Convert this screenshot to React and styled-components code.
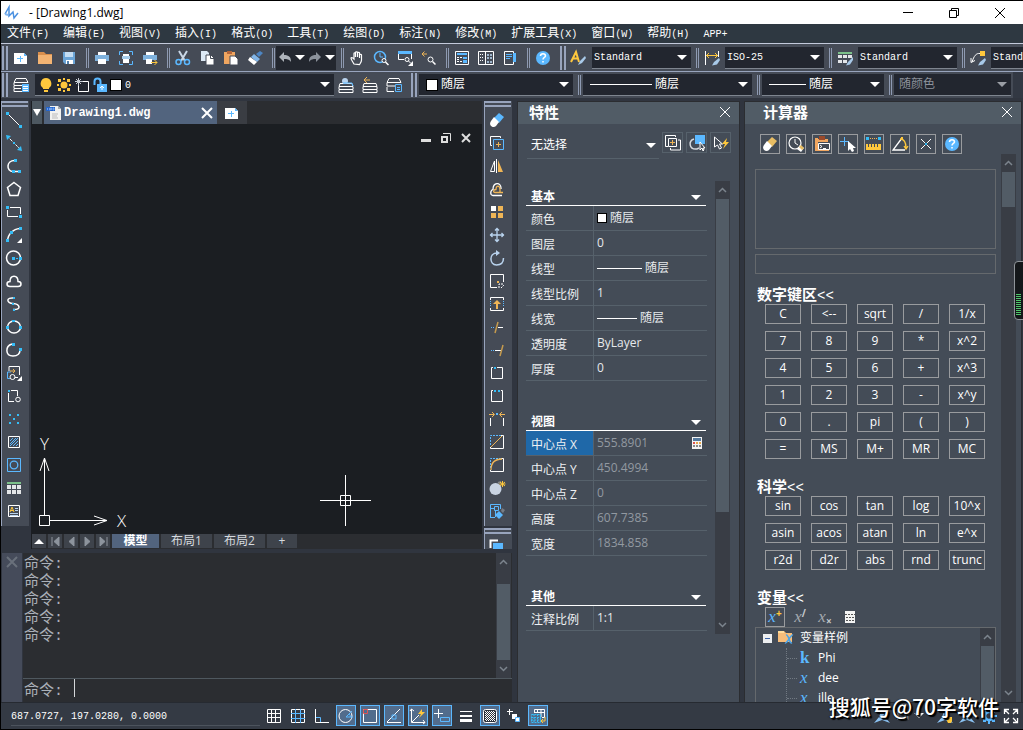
import React, { useState } from 'react';
import styled, { createGlobalStyle, css } from 'styled-components';

const UI = "'Open Sans', 'Noto Sans CJK SC', sans-serif";
const MONO = "'Liberation Mono', 'Noto Sans CJK SC', monospace";

const W = '#ffffff';
const B = '#5bb8ff';
const C = '#35bdf7';
const O = '#efb556';
const Y = '#ffc83d';
const L = '#b9d3ee';
const G = '#7cc08a';

const GlobalStyle = createGlobalStyle`
  * {
    box-sizing: border-box;
  }

  body {
    margin: 0;
    background: #323843;
    overflow: hidden;
  }

  button, input, select {
    margin: 0;
    padding: 0;
    border: 0;
    border-radius: 0;
    background: none;
    color: inherit;
    font: inherit;
    outline: none;
  }
`;

/* 16px glyphs used by every toolbar */
const glyphs = {
  newFile: <><path d="M1 3h10l3 3v8H1z" fill={W} /><path d="M11 3v3h3z" fill={B} /><path d="M4 8.500h6M7.500 6v6" stroke={B} /></>,
  open: <><path d="M1 2h6l2 2h6v10H1z" fill="#d98f4d" /><path d="M1 5h14v9H1z" fill="#f3b473" /></>,
  save: <><path d="M2 2h12v12H4l-2-2z" fill="#6ba5d7" /><path d="M4 2h8v5H4z" fill="#c3ddf3" /><path d="M5 10h7v4H5z" fill={W} /><path d="M6 11h2v3H6z" fill="#5482ad" /></>,
  print: <><path d="M4 2h8v3H4z" fill={W} /><path d="M1 5h14v6H1z" fill="#7fb2dd" /><path d="M4 9h8v5H4z" fill={W} /></>,
  preview: <><path d="M1.500 5V1.500H5M11 1.500h3.500V5M1.500 11v3.500H5M11 14.500h3.500V11" stroke={B} /><path d="M5 4h6v2H5zM5 9h6v4H5z" fill={W} /><path d="M4 6h8v3H4z" fill="#a5cceb" /></>,
  plot: <><path d="M4 2h8v3H4z" fill={W} /><path d="M1 5h14v5H1z" fill="#7fb2dd" /><path d="M4 9h6v5H4z" fill={W} /><path d="M9 12.500h6M12.500 10l2.500 2.500-2.500 2.500" stroke={Y} /></>,
  cut: <><path d="M4 1l6 10M12 1L6 11" stroke="#c9d7e6" strokeWidth="2" /><circle cx="3.500" cy="12" r="2.500" stroke={B} strokeWidth="1.500" /><circle cx="12" cy="12" r="2.500" stroke={B} strokeWidth="1.500" /></>,
  copy: <><path d="M2 1h6l2 2v8H2z" fill="#dce9f5" /><path d="M7 5h5l3 3v7H7z" fill={W} stroke="#454b56" /><path d="M11.500 5v3.500H15" stroke="#454b56" /></>,
  paste: <><path d="M1 2h11v12H1z" fill="#f0a660" /><path d="M4 1h5v3H4z" fill="#b5673b" /><path d="M7 6h5l3 3v6H7z" fill={W} stroke="#454b56" /></>,
  brush: <><path d="M13 1l3 2-4 4-3-3z" fill="#4d86c4" /><path d="M7 4l6 5-3 3-6-5z" fill="#82b6e8" /><path d="M3 7l7 5-3 3-6-5z" fill={W} /></>,
  undo: <path d="M2 7l5-5v3c5 0 7 2 7 7-2-3-4-3-7-3v3z" fill="#aeb3ba" />,
  redo: <path d="M14 7L9 2v3c-5 0-7 2-7 7 2-3 4-3 7-3v3z" fill="#8c929b" />,
  hand: <path d="M5 14c-1-2-3-4-3-6 1-1 2 0 3 1V3.500c0-1 1.500-1 1.500 0V7 2.500c0-1 2-1 2 0V7 3c0-1 2-1 2 0v5V5c0-1 2-1 2 0v5c0 2-1 3-2 4.500z" stroke={W} strokeWidth="1.200" />,
  zoomTime: <><circle cx="7" cy="7" r="5.500" stroke={B} strokeWidth="1.500" /><path d="M7 3v4h3" stroke={B} /><circle cx="11" cy="10.500" r="2" stroke={W} fill="#454b56" /><path d="M12.500 12l3 3" stroke={W} strokeWidth="1.500" /></>,
  zoomWin: <><path d="M1 1h14v3H1z" fill={B} /><path d="M1.500 4v5.500H7M14.500 4v5" stroke={W} /><circle cx="10" cy="9.500" r="2" stroke={W} /><path d="M11.500 11l2 2" stroke={W} /><path d="M16 11v5h-5z" fill={W} /></>,
  zoomPrev: <><path d="M1 4h5M3.500 1.500L1 4l2.500 2.500" stroke={O} /><circle cx="9.500" cy="9.500" r="2.500" stroke={W} /><path d="M11.500 11.500l3 3" stroke={W} strokeWidth="1.500" /></>,
  propsSheet: <><path d="M1.500 1.500h13v13h-13z" stroke={W} /><path d="M3 3h10v2H3z" fill={B} /><path d="M3 7.500h5M3 9.500h3M3 11.500h5" stroke={W} strokeDasharray="2 1" /><path d="M9 7h4v2H9zM9 10h4v3H9z" fill={B} /></>,
  design: <><path d="M.500 1.500h15v13H.500zM7.500 1v14" stroke={W} /><path d="M2 4.500h4M2 7.500h4M2 10.500h4" stroke={W} strokeDasharray="1 1" /><path d="M9 4h2v2H9zM12 4h2v2h-2zM9 7h2v2H9zM12 7h2v2h-2zM9 11h2v2H9zM12 11h2v2h-2z" fill="#9fb6cd" /></>,
  toolSheet: <><path d="M2.500 1.500h9v13h-9z" stroke={W} /><path d="M4 4.500h6M4 6.500h6M4 8.500h4" stroke={B} /><path d="M11 3h3v9h-3z" fill={B} /></>,
  help: <><circle cx="8" cy="8" r="7" fill={B} /><path d="M5.500 6c0-3 5-3 5 0 0 1.500-2.500 1.500-2.500 3.500M8 11v1.500" stroke={W} strokeWidth="1.500" /></>,
  textStyle: <><path d="M1 12L6 2l3 10M3 8.500h5" stroke={Y} strokeWidth="2" /><path d="M15 6l-5 5-2 4 4-2 4-5z" fill="#a8c9e8" /></>,
  dimStyle: <><path d="M1.500 1v14M14.500 1v6" stroke={W} /><path d="M2 5.500h12M5 3L2.500 5.500 5 8M11 3l2.500 2.500L11 8" stroke={Y} /><path d="M15 8l-5 4-2 3.500 5-1L16 10z" fill="#a8c9e8" /></>,
  tableStyle: <><path d="M1 2h14v2H1z" fill={G} /><path d="M1 5h4v3H1zM6 5h4v3H6zM11 5h4v3h-4zM1 10h4v3H1zM6 10h4v3H6z" fill="#e4e6e8" /><path d="M16 7l-5 5-2 3.500 4-1L16 10z" fill="#a8c9e8" /></>,
  leader: <><path d="M10 1h5v5h-5z" fill={Y} /><path d="M10 3.500C6 3 4 6 2 12M1 8v4.500l4-2" stroke={W} /><path d="M15 8l-5 4-2 3.500 5-1L16 10z" fill="#a8c9e8" /></>,
  layers: <><path d="M3 1.500h10l2 4H1zM1 6v2.500h8M1 9v2.500h7M1 12v2.500h8" stroke={W} /><path d="M9 7h7v8H9z" fill={B} /><path d="M10 9.500h5M10 11.500h5M10 13.500h5" stroke={W} /></>,
  bulb: <><path d="M8 1a5.500 5.500 0 0 1 3 10v1H5v-1A5.500 5.500 0 0 1 8 1z" fill={Y} /><path d="M6 13h4v2H6z" fill={Y} /></>,
  sun: <><circle cx="8" cy="8" r="3.500" fill={Y} /><path d="M7 1h2v2H7zM7 13h2v2H7zM1 7h2v2H1zM13 7h2v2h-2zM2 2h3v3H2zM11 2h3v3h-3zM2 11h3v3H2zM11 11h3v3h-3z" fill={Y} /></>,
  freeze: <><path d="M4.500 8v6.500h10v-10H9" stroke={W} /><path d="M4.500 1v8M1 4.500h8M2 2l5 5M7 2L2 7" stroke="#c7cdd4" /></>,
  unlock: <><path d="M2.500 8V4.500c0-4 6-4 6 0V8" stroke={B} strokeWidth="2" /><path d="M5 7h10v8H5z" fill={B} /><path d="M10 13V9M8 11l2-2 2 2" stroke={W} /></>,
  layerCur: <><path d="M2 6.500h12l1 3H1zM1 10v2.500h14V10M1 13v2.500h14V13" stroke={W} /><circle cx="7" cy="4" r="3" fill={L} /><path d="M5 6h9l1 3" stroke={B} /></>,
  layerPrev: <><path d="M2 6.500h12l1 3H1zM1 10v2.500h14V10M1 13v2.500h14V13" stroke={W} /><path d="M2 3h6M5 0L2 3l3 3" stroke={O} /></>,
  layerMgr: <><path d="M3 1.500h10l2 4H1zM1 6v3h8M1 10v4.500h7" stroke={W} /><path d="M9.500 7.500h6v7h-6zM11 10.500h3M11 12.500h3" stroke={B} /></>,
  dwg: <><path d="M4 1h8l3 3v11H4z" fill="#f2f2f0" /><path d="M12 1v3h3z" fill="#aaa" /><path d="M0 2h9v4H0z" fill="#2364cc" /><path d="M1.500 3v2M3.500 3v2h1V3h1v2M7 3h1v2H7z" stroke="#9cc6ff" strokeWidth=".6" /><path d="M6 9h6M6 11h5M6 13h6" stroke="#bbb" /></>,

  line: <><path d="M2 2l12 12" stroke={W} /><path d="M0 0h3v3H0zM13 13h3v3h-3z" fill={C} /></>,
  xline: <><path d="M1 1l14 14" stroke={W} strokeDasharray="3 1" /><path d="M0 0l5 1-4 4zM16 16l-5-1 4-4z" fill={C} /><path d="M7 7h2v2H7z" fill={C} /></>,
  pline: <><path d="M9 2.500C0 2 0 13.500 7 13.500h7" stroke={W} strokeWidth="1.500" /><path d="M8 1h3v3H8zM6 12h3v3H6zM12 12h3v3h-3z" fill={C} /></>,
  polygon: <path d="M8 1.500l6.500 5-2.500 8H4l-2.500-8z" stroke={W} strokeWidth="1.500" />,
  rect: <><path d="M4 3.500h10.500V10M12 12.500H1.500V6" stroke={W} /><path d="M0 2h3v3H0zM13 11h3v3h-3z" fill={C} /></>,
  arc: <><path d="M1.500 14C2 7 7 2 14 1.500" stroke={W} strokeWidth="1.500" /><path d="M0 12h3v3H0zM4 4h3v3H4zM13 0h3v3h-3z" fill={C} /><path d="M16 11v5h-5z" fill={W} /></>,
  circle: <><circle cx="7.500" cy="8" r="7" stroke={W} strokeWidth="1.500" /><path d="M6 7h3v3H6zM10 8h2v1h-2zM13 7h3v3h-3z" fill={C} /></>,
  cloud: <path d="M4 13.500c-4 0-4-5 0-5 0-7 8-7 8 0 4 0 4 5 0 5z" stroke={W} strokeWidth="1.500" />,
  spline: <><path d="M8 2C0 1 0 7 7 7.500S16 14 7 13.500" stroke={W} strokeWidth="1.500" /><path d="M7 1h2v2H7zM6 7h2v2H6zM7 13h2v2H7z" fill={C} /></>,
  ellipse: <><ellipse cx="8" cy="8" rx="6.500" ry="6" stroke={W} strokeWidth="1.500" /><path d="M6 1h3v2H6zM0 7h3v3H0zM13 7h3v3h-3z" fill={C} /></>,
  ellipseArc: <><path d="M6 2C-1 4-1 14 7 14c5 0 7-3 7-6" stroke={W} strokeWidth="1.500" /><path d="M6 1h3v3H6zM13 6h3v3h-3z" fill={C} /></>,
  insert: <><path d="M3 6V1.500h10.500V10" stroke={W} /><path d="M5 7H1.500v6.500H4" stroke={B} /><path d="M4 6h5M7 4l2 2-2 2" stroke={O} /><circle cx="6.500" cy="12" r="2.500" stroke={W} /><path d="M9 12.500h3" stroke={W} /><path d="M16 11v5h-5z" fill={W} /></>,
  block: <><path d="M5 2.500h6.500V8M2.500 5v8.500H8" stroke={W} /><path d="M2 2h2v2H2z" fill={C} /><circle cx="12" cy="11.500" r="2.300" stroke={W} /></>,
  points: <path d="M3 3h2v2H3zM11 3h2v2h-2zM7 7h2v2H7zM3 11h2v2H3zM11 11h2v2h-2z" fill={C} />,
  hatch: <><path d="M2.500 2.500h11v11h-11z" stroke={W} /><path d="M4 7l3-3M4 10l6-6M4 12l8-8M7 12l5-5M10 12l2-2" stroke={B} /></>,
  region: <><path d="M1.500 1.500h13v13h-13z" stroke={B} /><circle cx="8" cy="8" r="3.800" stroke={B} strokeWidth="1.300" /></>,
  table: <><path d="M1 2h14v2H1z" fill={G} /><path d="M1 5h4v4H1zM6 5h4v4H6zM11 5h4v4h-4zM1 10h4v4H1zM6 10h4v4H6zM11 10h4v4h-4z" fill="#e4e6e8" /></>,
  mtext: <><path d="M2.500 2.500h11v11h-11z" stroke={W} /><path d="M4 9l2-5 2 5M5 7.500h2" stroke={Y} /><path d="M9 5.500h3M9 7.500h3M4 10.500h8M4 12.500h8" stroke={L} /></>,

  eraser: <><path d="M10 1l5 4-5 6-5-5z" fill={B} /><path d="M5 5l5 5-3 4c-3 3-8-1-5-5z" fill={W} /></>,
  duplicate: <><path d="M3 10.500H1.500v-9h10V3" stroke={W} /><path d="M4.500 4.500h10v10h-10z" stroke={B} /><path d="M7 9.500h5M9.500 7v5" stroke={O} /></>,
  mirror: <><path d="M5.500 3v10.500H1.500z" stroke={W} /><path d="M7.500 1v14" stroke={W} /><path d="M9 2v12h5z" fill={O} /></>,
  offset: <><path d="M13 14.500H4c-3 0-3-5 0-6C4 1 12 1 12 7v1" stroke={W} strokeWidth="1.300" /><path d="M14 11.500H6c-2 0-2-3 1-3 0-5 4-4 4 0v3" stroke={O} strokeWidth="1.300" /></>,
  array: <><path d="M2 2h5v5H2z" fill={W} /><path d="M9 2h5v5H9zM2 9h5v5H2zM9 9h5v5H9z" fill={O} /></>,
  move: <path d="M8 1v14M1 8h14M6 3.500L8 1.500l2 2M6 12.500l2 2 2-2M3.500 6l-2 2 2 2M12.500 6l2 2-2 2" stroke={L} strokeWidth="1.300" />,
  rotate: <><path d="M8 3C0 3 0 14.500 7.500 15c5 0 7-3 7-7" stroke={L} strokeWidth="1.500" /><path d="M7 0l4 3-4 3z" fill={L} /></>,
  scale: <><path d="M8 14.500H1.500v-13h13V9" stroke={W} /><path d="M8 8h2v2H8z" fill={O} /><path d="M10 15v-4h5M12 15l3-3" stroke={W} strokeDasharray="2 1" /></>,
  stretch: <><path d="M1.500 4V1.500h13V4M1.500 12v2.500h13V12" stroke={W} /><path d="M1.500 5v6M14.500 5v6" stroke={B} strokeDasharray="1 1" /><path d="M8 4l4 4H9v5H7V8H4z" fill={O} /></>,
  trim: <><path d="M2 8.500h4" stroke={B} strokeDasharray="1 1" /><path d="M9 8.500h5" stroke={W} /><path d="M9 3L6 14" stroke="#c49a4e" strokeWidth="1.500" /></>,
  extend: <><path d="M2 8.500h4" stroke={B} strokeDasharray="1 1" /><path d="M6 8.500h6" stroke={W} /><path d="M14 3l-3 11" stroke="#c49a4e" strokeWidth="1.500" /></>,
  breakPt: <><path d="M4 2.500H2.500v11h11v-11H8" stroke={W} /><path d="M5 2h2v2H5z" fill={C} /></>,
  breakTwo: <><path d="M4 2.500H2.500v11h11v-11H12" stroke={W} /><path d="M5 2h2v2H5zM9 2h2v2H9z" fill={C} /></>,
  join: <><path d="M1.500 15V7M14.500 15V7" stroke={W} /><path d="M0 3.500h5M3 1l2.500 2.500L3 6M16 3.500h-5M13 1l-2.500 2.500L13 6" stroke={O} /><path d="M7 2h2v2H7z" fill={B} /></>,
  chamfer: <><path d="M12 1.500h2.500v13H1.500V13" stroke={W} /><path d="M1.500 11V1.500H12" stroke={B} strokeDasharray="2 1" /><path d="M2 13L13 2" stroke={O} /></>,
  fillet: <><path d="M12 1.500h2.500v13H1.500V13" stroke={W} /><path d="M1.500 11V1.500H12" stroke={B} strokeDasharray="2 1" /><path d="M2 13C2 6 6 2 13 2" stroke={O} strokeWidth="1.300" /></>,
  explode: <><circle cx="6.500" cy="9" r="6" fill="#c9d3e2" /><path d="M9 3l3-1" stroke="#888" strokeWidth="2" /><path d="M13.500 1v6M10.500 4h6M11 2l5 4M16 2l-5 4" stroke={Y} /></>,
  blockEdit: <><path d="M1.500 14V1.500h10V6M1 14.500h5M5.500 3.500h4v4h-4zM2 5.500h3M6.500 8v6" stroke={B} /><path d="M10 8l4 4-4 4-4-4z" fill={B} /><path d="M13 5l3 2-2 3-2-2z" fill="#777d85" /></>,
  order: <><path d="M1.500 9V1.500H9" stroke={W} strokeWidth="2" /><path d="M4 4h10v9H4z" fill={B} /><path d="M15 10h2v6h-2z" fill={W} /></>,

  pickAdd: <><path d="M3 11.500H.500v-11h10V2" stroke={W} /><path d="M3.500 3.500h8v8h-8z" stroke={W} /><path d="M13 5h2.500v10h-10V13" stroke={W} /><path d="M5 7.500h5M7.500 5v5" stroke={O} /></>,
  selectObj: <><path d="M5 4c-6 2-5 11 3 10l2-1" stroke="#d5d9dd" strokeWidth="1.500" /><path d="M6 0h10v9H6z" fill={B} /><path d="M11 7v8l2-2 1 3 1-1-1-2h2z" fill="#444c57" stroke={W} /></>,
  quickSel: <><path d="M1.500 2v10l3-2 2 4 2-1-2-4h3z" stroke={W} /><path d="M14 3l-5 6h3l-2 5 6-7h-3z" fill={Y} /></>,
  calc: <><path d="M3 2h10v12H3z" fill="#f4f4f4" /><path d="M4 3h8v3H4z" fill="#557a9e" /><path d="M4 7h2v2H4z" fill="#d9534f" /><path d="M7 7h2v2H7zM10 7h2v2h-2z" fill="#e9a94c" /><path d="M4 10h2v2H4zM7 10h2v2H7zM10 10h2v2h-2z" fill="#888" /></>,
  calcGrey: <><path d="M3 2h10v12H3z" fill="#f4f4f4" /><path d="M3 5.500h10M4 8.500h8M4 11.500h8" stroke="#555" strokeDasharray="2 1" /></>,
  eraserY: <><path d="M10 1l5 4-5 6-5-5z" fill="#e8bd63" /><path d="M5 5l5 5-3 4c-3 3-8-1-5-5z" fill={W} /></>,
  history: <><circle cx="7" cy="7" r="6" stroke={W} strokeWidth="1.200" /><path d="M7 3v4l3 2" stroke={W} /><path d="M12 9l4 3-3 4-4-3z" fill={W} /><path d="M13 9l3 3-2 2-3-3z" fill="#e8bd63" /></>,
  toCmd: <><path d="M1 2h3v11h11v2H1z" fill="#f0a660" /><path d="M3 3h11v3H3z" fill="#f0a660" /><path d="M5 0h6v4H5z" fill="#9b4a2b" /><path d="M4.500 7.500h11v6h-11z" stroke={W} fill="#444c57" /><path d="M6 9l2 1.500L6 12M9 12.500h3" stroke={W} /></>,
  getPoint: <><path d="M0 5.500h9M4.500 1v9" stroke={B} /><path d="M8 5v10l2-2 2 3 2-1-1-3h3z" fill={W} /></>,
  distance: <><path d="M0 1h3v3H0zM12 1h3v3h-3z" fill={C} /><path d="M4 2.500h7" stroke={O} strokeDasharray="1 1" /><path d="M0 8h15v6H0z" fill={Y} /><path d="M2.500 8v3M5.500 8v3M8.500 8v3M11.500 8v3" stroke="#444c57" /></>,
  angle: <><path d="M10 2L1 14h12" stroke={W} strokeWidth="1.300" /><path d="M8 3c4 0 6 3 6 9M12 10l2 3 2-3" stroke={Y} strokeWidth="1.300" /><path d="M9 1h2v2H9z" fill={Y} /></>,
  cross: <><path d="M3 3l10 10M13 3L3 13" stroke={W} /><path d="M7 7h2v2H7z" fill={C} /></>,

  grid: <path d="M1.500 1.500h13v13h-13zM5.500 1v14M9.500 1v14M1 5.500h14M1 9.500h14" stroke={W} />,
  snap: <><path d="M1.500 1.500h13v13h-13z" stroke={W} /><path d="M5.500 1v14M10.500 1v14M1 5.500h14M1 10.500h14" stroke={B} /></>,
  ortho: <><path d="M1.500 1v13.500H15" stroke={W} /><path d="M2 9.500h4.500V14" stroke={B} /></>,
  polar: <><circle cx="7.500" cy="8" r="6.500" stroke={W} /><path d="M14 3L8 9h7M11 6c1 1 2 2 1 3" stroke={B} /></>,
  osnap: <><path d="M1.500 1.500h13v13h-13z" stroke={W} /><path d="M1.500 1.500h4v4h-4z" stroke="#e05555" /></>,
  otrack: <><path d="M1 14.500h14M1 14L14 1" stroke={W} /><path d="M6 7h4v4H6z" stroke={B} /></>,
  ducs: <><path d="M1.500 1v13.500H15M2 14l7-7M13 12l2 2.500-2 1.500M0 3l1.500-2L4 3" stroke={W} /><path d="M12 1L8 6h3l-2 4 6-6h-3z" fill={Y} /></>,
  dyn: <><path d="M0 5.500h9M4.500 1v9" stroke={W} /><path d="M6.500 9.500h9v4h-9z" stroke={B} /></>,
  lwt: <path d="M2 3h12v1H2zM2 7h12v2H2zM2 11h12v3H2z" fill={W} />,
  transp: <><rect x="1.500" y="1.500" width="13" height="13" rx="2" stroke={W} fill="#2b323c" /><path d="M3 3.500h10M3 5.500h10M3 7.500h10M3 9.500h10M3 11.500h10" stroke={W} strokeDasharray="1 1" /><path d="M4 4.500h9M4 6.500h9M4 8.500h9M4 10.500h9M4 12.500h9" stroke={W} strokeDasharray="1 1" /></>,
  cycle: <><path d="M1 3.500h6M3.500 1v6" stroke={W} /><path d="M6 6h5v5H6z" fill={W} /><path d="M9.500 9.500h4v4h-4z" stroke={B} fill={W} /></>,
  filter: <><path d="M4.500 5V1.500h10v8H12M7.500 1v4M11 1v8M4 4.500h10" stroke={W} /><path d="M1.500 6.500h9v8h-9zM4 6v9M7.500 6v9M1 9.500h10M1 12h10" stroke={C} strokeDasharray="2 1" /><path d="M15 9v4h-4M13 11l-2 2 2 2" stroke={Y} /></>,
  gear: <><circle cx="8" cy="8" r="4" stroke={B} strokeWidth="2.500" /><path d="M7 0h2v3H7zM7 13h2v3H7zM0 7h3v2H0zM13 7h3v2h-3zM2 2h3v3H2zM11 2h3v3h-3zM2 11h3v3H2zM11 11h3v3h-3z" fill={B} /></>,
  annot: <path d="M8 1l3 8 5 6-8-3-8 3 5-6z" fill="#8cc4f5" />,
  annotBulb: <><path d="M8 1l3 8 5 6-8-3-8 3 5-6z" fill="#8cc4f5" /><path d="M10 9h5v4l-1 2h-3l-1-2z" fill={Y} /></>,
  expand: <path d="M1.500 6V1.500H6M10 1.500h4.500V6M1.500 10v4.500H6M10 14.500h4.500V10M2 2l4 4M14 2l-4 4M2 14l4-4M14 14l-4-4" stroke={W} strokeWidth="1.300" />,
  logo: <><path d="M2 9l4-7v9l4-4 1 6 4-5" stroke="#4a90e0" strokeWidth="1.500" /><path d="M2 9l3 1" stroke="#82b5ef" strokeWidth="2" /></>,
  folderVar: <>
    <path d="M0 1h6l2 2h6v9H0z" fill="#f7bd7a" />
    <path d="M0 1h6v2H0z" fill="#ffdc9c" />
    <path d="M8 5c3-1 3 9 6 8M15 5c-2-1-6 9-8 8" stroke="#4aa3e8" strokeWidth="1.500" />
  </>,
};

const Svg = styled.svg`
  display: block;
  flex: none;
  overflow: visible;
`;

const Icon = ({ name }) => (
  <Svg width="16" height="16" viewBox="0 0 16 16" fill="none" aria-hidden="true">
    {glyphs[name]}
  </Svg>
);

const Caret = ({ color = W }) => (
  <Svg width="10" height="5" viewBox="0 0 10 5" aria-hidden="true">
    <path d="M0 0h10L5 5z" fill={color} />
  </Svg>
);

const CloseX = ({ color = W, weight = 1 }) => (
  <Svg width="10" height="10" viewBox="0 0 10 10" fill="none" aria-hidden="true">
    <path d="M0 0l10 10M10 0L0 10" stroke={color} strokeWidth={weight} />
  </Svg>
);

const Window = styled.div`
  display: flex;
  flex-direction: column;
  position: relative;
  height: 100vh;
  border: 1px solid #000;
  border-right: 0;
  background: #323843;
  color: #fff;
  font: 12px/16px ${UI};
  overflow: hidden;
`;

const TitleBar = styled.header`
  display: flex;
  align-items: center;
  flex: none;
  height: 23px;
  padding-left: 2px;
  gap: 10px;
  background: #fff;
  color: #000;
`;

const WinTitle = styled.h1`
  flex: 1;
  margin: 0;
  font-size: 12px;
  font-weight: 400;
`;

const WinButton = styled.button`
  display: flex;
  align-items: center;
  justify-content: center;
  width: 46px;
  height: 23px;
`;

const MenuBar = styled.nav`
  display: flex;
  flex: none;
  gap: 14px;
  height: 20px;
  padding-left: 6px;
  background: #2e3841;
  border-bottom: 1px solid #c3cadb;
  line-height: 18px;
  white-space: nowrap;
`;

const MenuItem = styled.button`
  height: 17px;
  line-height: 17px;
`;

const Key = styled.span`
  font: 10px ${MONO};
`;

const ToolRow = styled.div`
  display: flex;
  align-items: center;
  flex: none;
  height: ${(p) => (p.$main ? 28 : 26)}px;
  margin-right: ${(p) => (p.$main ? 0 : 10)}px;
  background: #454b56;
  border-bottom: ${(p) => (p.$main ? '1px solid #98a4bd' : 0)};
  overflow: hidden;
`;

const Grip = styled.i`
  flex: none;
  width: 6px;
  height: 24px;
  margin-left: ${(p) => (p.$first ? 1 : 5)}px;
  margin-right: ${(p) => (p.$first ? 1 : 0)}px;
  border: solid #98a4bd;
  border-width: 0 2px;
`;

const Sep = styled.i`
  flex: none;
  width: 3px;
  height: 20px;
  margin: 0 1px 0 5px;
  border: solid #8e9ab2;
  border-width: 0 1px;
`;

const ToolButton = styled.button`
  display: flex;
  align-items: center;
  justify-content: center;
  flex: none;
  width: ${(p) => p.$w || 24}px;
  height: 22px;
`;

const UndoBox = styled.div`
  display: flex;
  align-items: center;
  flex: none;
  width: 60px;
  height: 24px;
  background: #23272f;
`;

const Combo = styled.label`
  display: flex;
  align-items: center;
  flex: none;
  gap: 3px;
  width: ${(p) => p.$w}px;
  height: 22px;
  margin-left: ${(p) => p.$gap || 2}px;
  padding: 0 4px 0 ${(p) => p.$pad || 2}px;
  background: #22262f;
  border-bottom: 1px solid #7e858f;
  color: ${(p) => (p.$dim ? '#8d929b' : '#fff')};

  select {
    flex: 1;
    min-width: 0;
    padding-top: ${(p) => (p.$latin ? 2 : 0)}px;
    appearance: none;
    opacity: 1;
    font: ${(p) => (p.$latin ? 10 : 12)}px/18px ${MONO};
  }

  option {
    background: #22262f;
  }
`;

const Swatch = styled.i`
  flex: none;
  width: ${(p) => p.$size || 12}px;
  height: ${(p) => p.$size || 12}px;
  background: #fff;
  border: 1px solid #000;
`;

const Stroke = styled.i`
  flex: none;
  width: ${(p) => p.$w}px;
  height: 1px;
  background: #fff;
`;

const LayerState = styled.span`
  display: flex;
  align-items: center;
  gap: 2px;
`;

const Main = styled.main`
  display: flex;
  flex: 1;
  min-height: 0;
  padding: 3px 2px 0 0;
  background: #30353f;
`;

const Workspace = styled.div`
  display: flex;
  flex-direction: column;
  flex: 1;
  gap: 4px;
  min-width: 0;
  padding-right: 2px;
`;

const DrawingRow = styled.div`
  display: flex;
  flex: 1;
  gap: 2px;
  min-height: 0;
`;

const SideColumn = styled.div`
  display: flex;
  flex-direction: column;
  flex: none;
  gap: 2px;
  width: 28px;
  overflow: hidden;
`;

const SideTools = styled.div`
  flex: none;
  padding-bottom: 4px;
  background: #454b56;
  border-left: 1px solid #98a4bd;
`;

const SideGrip = styled.i`
  display: block;
  height: 6px;
  margin: 0 1px 1px 0;
  border: solid #98a4bd;
  border-width: 2px 0;
`;

const SideButton = styled.button`
  display: flex;
  justify-content: center;
  width: 24px;
  height: 23px;
  padding-top: 4px;
`;

const Document = styled.section`
  display: flex;
  flex-direction: column;
  flex: 1;
  min-width: 0;
  padding-left: 1px;
  background: #1b1e22;
`;

const DocTabs = styled.div`
  display: flex;
  flex: none;
  height: 23px;
  background: #2b2d31;
`;

const DocMenu = styled.button`
  display: flex;
  align-items: center;
  justify-content: center;
  width: 10px;
  margin-right: 2px;
  background: #4d5861;
`;

const DocTab = styled.div`
  display: flex;
  align-items: center;
  gap: 2px;
  width: 173px;
  padding: 0 5px 0 2px;
  background: #52647e;
  font: bold 12px/20px ${MONO};

  span {
    flex: 1;
  }
`;

const PlainButton = styled.button`
  display: flex;
  align-items: center;
`;

const NewTab = styled.button`
  display: flex;
  align-items: center;
  justify-content: center;
  width: 30px;
  background: #3a3d43;
`;

const Canvas = styled.div`
  position: relative;
  flex: 1;
  min-height: 0;
  background: #1b1e22;
`;

const MdiButtons = styled.div`
  display: flex;
  justify-content: flex-end;
  align-items: center;
  gap: 10px;
  padding: 9px 11px 0 0;
`;

const OnCanvas = styled.svg`
  position: absolute;
  left: ${(p) => p.$left}px;
  bottom: ${(p) => p.$bottom}px;
  overflow: visible;
  font: 300 17px ${UI};
`;

const LayoutTabs = styled.div`
  display: flex;
  flex: none;
  gap: 2px;
  height: 15px;
  background: #2b2d31;
`;

const LayoutTab = styled.button`
  display: flex;
  align-items: center;
  justify-content: center;
  width: ${(p) => p.$w}px;
  height: 14px;
  background: ${(p) => (p.$active ? '#52647e' : '#3e434b')};
  color: ${(p) => (p.$active ? '#fff' : '#d6dade')};
  font: ${(p) => (p.$active ? 'bold' : 'normal')} 12px/14px ${UI};
`;

const CommandPanel = styled.section`
  display: flex;
  flex: none;
  height: 149px;
  margin-left: 1px;
`;

const CommandStrip = styled.div`
  display: flex;
  align-items: flex-start;
  justify-content: center;
  width: 20px;
  padding-top: 4px;
  margin-right: 1px;
  background: #454b5a;
`;

const CommandBody = styled.div`
  display: flex;
  flex-direction: column;
  flex: 1;
  background: #2b2d31;
  color: #abb1b9;
  font: 15px/18px ${MONO};
`;

const CommandLog = styled.div`
  display: flex;
  flex: 1;
  justify-content: space-between;
  min-height: 0;
  border-bottom: 1px solid #4f585f;

  ol {
    margin: 0;
    padding: 3px 0 0 1px;
    list-style: none;
  }
`;

const CommandLine = styled.label`
  display: flex;
  height: 23px;
  padding-left: 1px;
  line-height: 26px;

  input {
    flex: 1;
    height: 18px;
    margin-left: 2px;
    border-left: 1px solid #d4d7da;
  }
`;

const ScrollTrack = styled.div`
  display: flex;
  flex-direction: column;
  align-items: center;
  justify-content: space-between;
  flex: none;
  width: 15px;
  margin: ${(p) => p.$margin || 0};
  background: #393d45;
`;

const ScrollThumb = styled.div`
  width: 13px;
  height: ${(p) => p.$h};
  margin-bottom: auto;
  margin-top: ${(p) => p.$top || 0}px;
  background: #525c66;
`;

const ScrollButton = styled.button`
  display: flex;
  align-items: center;
  justify-content: center;
  flex: none;
  width: 15px;
  height: 18px;
`;

const Scrollbar = ({ thumb, top, margin, endless }) => (
  <ScrollTrack $margin={margin}>
    <ScrollButton aria-label="Scroll up">
      <Svg width="7" height="4" viewBox="0 0 7 4" fill="none"><path d="M0 4l3.500-3.500L7 4" stroke="#7c848d" strokeWidth="1.500" /></Svg>
    </ScrollButton>
    <ScrollThumb $h={thumb} $top={top} />
    {!endless && (
      <ScrollButton aria-label="Scroll down">
        <Svg width="7" height="4" viewBox="0 0 7 4" fill="none"><path d="M0 0l3.500 3.500L7 0" stroke="#7c848d" strokeWidth="1.500" /></Svg>
      </ScrollButton>
    )}
  </ScrollTrack>
);

const Palette = styled.section`
  display: flex;
  flex-direction: column;
  flex: none;
  width: ${(p) => p.$w}px;
  margin: 1px 0 0 ${(p) => p.$gap}px;
  background: #444c57;
  box-shadow: 0 0 0 1px #2b2d31;
`;

const PaletteHead = styled.header`
  display: flex;
  align-items: center;
  justify-content: space-between;
  flex: none;
  height: 22px;
  padding: 0 9px 2px ${(p) => p.$pad}px;
  background: #515c66;

  h2 {
    margin: 0;
    font: bold 15px/20px ${UI};
  }
`;

const PropertiesBody = styled.div`
  padding: 8px 8px 0;
`;

const Picker = styled.div`
  display: flex;
  gap: 3px;
`;

const PickerSelect = styled.label`
  display: flex;
  align-items: center;
  flex: 1;
  height: 27px;
  margin-left: 1px;
  padding: 0 3px 0 4px;
  border-bottom: 1px solid #56616b;

  select {
    flex: 1;
    min-width: 0;
    appearance: none;
  }

  option {
    background: #444c57;
  }
`;

const PickerButton = styled.button`
  display: flex;
  align-items: center;
  justify-content: center;
  width: 21px;
  height: 21px;
  border: 1px solid #56616b;
`;

const PropertyScroll = styled.div`
  display: flex;
`;

const PropertyList = styled.div`
  flex: 1;
  padding-bottom: 3px;
`;

const GroupHead = styled.h3`
  display: flex;
  align-items: flex-end;
  justify-content: space-between;
  height: ${(p) => (p.$first ? 47 : 50)}px;
  margin: 0 1px 0 0;
  padding: 0 5px 1px 5px;
  border-bottom: 1px solid #fff;
  font-size: 12px;
  line-height: 14px;

  svg {
    margin-bottom: 4px;
  }
`;

const PropertyTable = styled.table`
  width: 100%;
  table-layout: fixed;
  border-collapse: separate;
  border-spacing: 0;

  th, td {
    height: 25px;
    border-bottom: 1px solid #56616b;
    text-align: left;
    vertical-align: middle;
  }

  th {
    width: 68px;
    padding: 4px 0 0 5px;
    border-right: 1px solid #56616b;
    font-weight: 400;
    color: #eef0f2;
  }

  td {
    padding: 0 2px 0 3px;
    color: #e6e9ec;
  }
`;

const PropertyRow = styled.tr`
  ${(p) => p.$selected && css`
    th {
      background: #1f68a8;
    }
  `}

  input {
    display: block;
    flex: 1;
    min-width: 0;
    width: 100%;
    height: 16px;
    color: ${(p) => (p.$readOnly ? '#9299a1' : '#e6e9ec')};
  }
`;

const ValueCell = styled.div`
  display: flex;
  align-items: center;
  gap: 3px;
`;

const CalcBody = styled.div`
  display: flex;
  flex: 1;
  min-height: 0;
  padding: 0 5px 0 10px;
`;

const CalcMain = styled.div`
  display: flex;
  flex-direction: column;
  flex: 1;
  min-height: 0;
  padding-top: 10px;
  overflow: hidden;
`;

const CalcTools = styled.div`
  display: flex;
  flex: none;
  gap: 6px;
  padding-left: 5px;
`;

const CalcTool = styled.button`
  display: flex;
  align-items: center;
  justify-content: center;
  width: 20px;
  height: 20px;
  border: 1px solid ${(p) => (p.$flat ? 'transparent' : '#999b9e')};
`;

const CalcHistory = styled.div`
  flex: none;
  height: 80px;
  margin: 15px 0 5px;
  border: 1px solid #65696d;
`;

const CalcInput = styled.input`
  flex: none;
  height: 20px;
  border: 1px solid #65696d;
`;

const CalcHeading = styled.h3`
  flex: none;
  margin: ${(p) => (p.$first ? 10 : 17)}px 0 0 2px;
  font: bold 15px/20px ${UI};

  span {
    font: 14px ${MONO};
  }
`;

const Keys = styled.div`
  display: grid;
  flex: none;
  grid-template-columns: repeat(5, 36px);
  gap: 7px 10px;
  padding-left: 10px;

  button {
    height: 20px;
    border: 1px solid #999b9e;
    font-size: 12px;
    line-height: 18px;
    white-space: nowrap;
  }
`;

const VarTools = styled.div`
  display: flex;
  flex: none;
  gap: 5px;
  padding-left: 10px;
`;

const VarLetter = styled.span`
  display: flex;
  color: ${(p) => p.$color};
  font: ${(p) => (p.$bold ? 'bold' : 'italic')} 17px/16px 'Liberation Serif', serif;
`;

const VarMark = styled.span`
  align-self: ${(p) => (p.$low ? 'flex-end' : 'flex-start')};
  color: ${(p) => p.$color};
  font: bold 10px/8px ${UI};
`;

const TreeBox = styled.div`
  display: flex;
  flex: 1;
  min-height: 0;
  border: 1px solid #65696d;
  border-bottom: 0;
  overflow: hidden;
`;

const Tree = styled.ul`
  flex: 1;
  margin: 0;
  padding: 0 0 0 7px;
  list-style: none;

  ul {
    margin: 0 0 0 23px;
    padding: 0;
    border-left: 1px dotted #717982;
    list-style: none;
  }
`;

const TreeItem = styled.div`
  display: flex;
  align-items: center;
  height: 20px;
  gap: 6px;
`;

const TreeLine = styled.i`
  width: 10px;
  border-top: 1px dotted #717982;
  margin-right: -3px;
`;

const VarCell = styled.span`
  width: 12px;
`;

const EdgeMeter = styled.div`
  display: flex;
  align-items: flex-end;
  position: absolute;
  right: -4px;
  top: 260px;
  width: 13px;
  height: 59px;
  padding: 0 5px 3px 1px;
  border: 1px solid #8f9499;
  border-radius: 4px;
  background: #14171a;

  i {
    flex: 1;
    height: 22px;
    background: repeating-linear-gradient(#4fc76a 0 1px, #14171a 1px 2px);
  }
`;

const StatusBar = styled.footer`
  display: flex;
  align-items: center;
  flex: none;
  gap: 4px;
  height: 27px;
  padding: 0 2px 1px 10px;
  background: #343a44;
  border-top: 1px solid #262a31;
`;

const Coordinates = styled.output`
  width: 249px;
  height: 21px;
  border-bottom: 1px solid #4c535d;
  font: 10px/23px ${MONO};
`;

const StatusToggle = styled.button`
  display: flex;
  align-items: center;
  justify-content: center;
  flex: none;
  width: 20px;
  height: 21px;
  background: ${(p) => (p.$on ? '#526c8c' : 'none')};
  border: 1px solid ${(p) => (p.$on ? B : 'transparent')};
`;

const StatusEnd = styled.div`
  display: flex;
  align-items: center;
  gap: 2px;
  margin-left: auto;
`;

const ScaleText = styled.button`
  display: flex;
  align-items: center;
  justify-content: space-between;
  width: 30px;
  margin-right: 9px;
  color: #8f959d;
`;

const Watermark = styled.div`
  position: absolute;
  right: 24px;
  bottom: 7px;
  font: 500 21px/32px 'Noto Sans CJK SC', sans-serif;
  text-shadow: 1px 1px 1px #000, 2px 2px 1px #000, -1px 0 1px #222;
  white-space: nowrap;
`;

const menus = [
  ['文件', '(F)'], ['编辑', '(E)'], ['视图', '(V)'], ['插入', '(I)'], ['格式', '(O)'], ['工具', '(T)'],
  ['绘图', '(D)'], ['标注', '(N)'], ['修改', '(M)'], ['扩展工具', '(X)'], ['窗口', '(W)'], ['帮助', '(H)'], ['', 'APP+'],
];

const drawTools = ['line', 'xline', 'pline', 'polygon', 'rect', 'arc', 'circle', 'cloud', 'spline', 'ellipse',
  'ellipseArc', 'insert', 'block', 'points', 'hatch', 'region', 'table', 'mtext'];

const modifyTools = ['eraser', 'duplicate', 'mirror', 'offset', 'array', 'move', 'rotate', 'scale', 'stretch', 'trim',
  'extend', 'breakPt', 'breakTwo', 'join', 'chamfer', 'fillet', 'explode', 'blockEdit'];

const groups = [
  {
    title: '基本',
    rows: [
      { name: '颜色', value: '随层', swatch: true },
      { name: '图层', value: '0' },
      { name: '线型', value: '随层', stroke: 45 },
      { name: '线型比例', value: '1' },
      { name: '线宽', value: '随层', stroke: 40 },
      { name: '透明度', value: 'ByLayer' },
      { name: '厚度', value: '0' },
    ],
  },
  {
    title: '视图',
    readOnly: true,
    rows: [
      { name: '中心点 X', value: '555.8901', selected: true },
      { name: '中心点 Y', value: '450.4994' },
      { name: '中心点 Z', value: '0' },
      { name: '高度', value: '607.7385' },
      { name: '宽度', value: '1834.858' },
    ],
  },
  { title: '其他', rows: [{ name: '注释比例', value: '1:1' }] },
];

const numberKeys = ['C', '<--', 'sqrt', '/', '1/x', '7', '8', '9', '*', 'x^2', '4', '5', '6', '+', 'x^3',
  '1', '2', '3', '-', 'x^y', '0', '.', 'pi', '(', ')', '=', 'MS', 'M+', 'MR', 'MC'];

const scienceKeys = ['sin', 'cos', 'tan', 'log', '10^x', 'asin', 'acos', 'atan', 'ln', 'e^x', 'r2d', 'd2r', 'abs', 'rnd', 'trunc'];

const layoutArrows = ['M1 0v9M8 0v9L3 4.500z', 'M7 0v9L2 4.500z', 'M2 0v9l5-4.500z', 'M8 0v9M1 0v9l5-4.500z'];

const statusTools = [
  ['grid'], ['snap'], ['ortho'], ['polar', true], ['osnap', true], ['otrack', true],
  ['ducs', true], ['dyn', true], ['lwt'], ['transp', true], ['cycle'], ['filter', true],
];

const Tools = ({ names }) => names.map((name) => (
  <ToolButton key={name} aria-label={name}><Icon name={name} /></ToolButton>
));

const DropDown = ({ label, value, dim, children, ...rest }) => (
  <Combo $dim={dim} {...rest}>
    {children}
    <select aria-label={label} disabled={dim} defaultValue={value}>
      <option>{value}</option>
    </select>
    <Caret color={dim ? '#9a9ea5' : W} />
  </Combo>
);

const SideToolbar = ({ names }) => (
  <SideTools>
    <SideGrip />
    {names.map((name) => (
      <SideButton key={name} aria-label={name}><Icon name={name} /></SideButton>
    ))}
  </SideTools>
);

const Toolbars = () => (
  <>
    <ToolRow $main>
      <Grip $first />
      <Tools names={['newFile', 'open', 'save']} />
      <Sep />
      <Tools names={['print', 'preview', 'plot']} />
      <Sep />
      <Tools names={['cut', 'copy', 'paste', 'brush']} />
      <Sep />
      <UndoBox>
        <ToolButton $w={18} aria-label="undo"><Icon name="undo" /></ToolButton>
        <ToolButton $w={12} aria-label="undo list"><Caret /></ToolButton>
        <ToolButton $w={18} aria-label="redo"><Icon name="redo" /></ToolButton>
        <ToolButton $w={12} aria-label="redo list"><Caret /></ToolButton>
      </UndoBox>
      <Sep />
      <Tools names={['hand', 'zoomTime', 'zoomWin', 'zoomPrev']} />
      <Sep />
      <Tools names={['propsSheet', 'design', 'toolSheet']} />
      <Sep />
      <Tools names={['help']} />
      <Grip />
      <Tools names={['textStyle']} />
      <DropDown label="Text style" value="Standard" $w={99} $latin />
      <Sep />
      <Tools names={['dimStyle']} />
      <DropDown label="Dimension style" value="ISO-25" $w={99} $latin $gap={1} />
      <Sep />
      <Tools names={['tableStyle']} />
      <DropDown label="Table style" value="Standard" $w={99} $latin $gap={1} />
      <Sep />
      <Tools names={['leader']} />
      <DropDown label="Leader style" value="Standard" $w={99} $latin $gap={1} />
    </ToolRow>
    <ToolRow>
      <Grip $first />
      <Tools names={['layers']} />
      <DropDown label="Layer" value="0" $w={299} $latin $pad={3}>
        <LayerState>
          <Icon name="bulb" />
          <Icon name="sun" />
          <Icon name="freeze" />
          <Icon name="unlock" />
          <Swatch />
        </LayerState>
      </DropDown>
      <Tools names={['layerCur', 'layerPrev', 'layerMgr']} />
      <Grip />
      <DropDown label="Color" value="随层" $w={154} $pad={7}><Swatch /></DropDown>
      <Sep />
      <DropDown label="Linetype" value="随层" $w={169} $pad={7} $gap={1}><Stroke $w={62} /></DropDown>
      <Sep />
      <DropDown label="Lineweight" value="随层" $w={122} $pad={7} $gap={1}><Stroke $w={37} /></DropDown>
      <Sep />
      <DropDown label="Plot style" value="随颜色" $w={117} $pad={5} $gap={1} dim />
    </ToolRow>
  </>
);

const DrawingArea = () => (
  <Document>
    <DocTabs>
      <DocMenu aria-label="Documents">
        <Svg width="8" height="7" viewBox="0 0 8 7"><path d="M0 0h8L4 7z" fill={W} /></Svg>
      </DocMenu>
      <DocTab>
        <Icon name="dwg" />
        <span>Drawing1.dwg</span>
        <PlainButton aria-label="Close drawing"><CloseX weight={2} /></PlainButton>
      </DocTab>
      <NewTab aria-label="New drawing"><Icon name="newFile" /></NewTab>
    </DocTabs>
    <Canvas>
      <MdiButtons>
        <PlainButton aria-label="Minimize drawing">
          <Svg width="10" height="10" viewBox="0 0 10 10"><path d="M0 6h10v3H0z" fill="#dedede" /></Svg>
        </PlainButton>
        <PlainButton aria-label="Restore drawing">
          <Svg width="10" height="10" viewBox="0 0 10 10" fill="none"><path d="M1 4h5v5H1z" stroke="#dedede" strokeWidth="2" /><path d="M2 .500h7.500V8" stroke="#dedede" /></Svg>
        </PlainButton>
        <PlainButton aria-label="Close view">
          <Svg width="10" height="10" viewBox="0 0 10 10" fill="none"><path d="M1 1l8 8M9 1L1 9" stroke="#dedede" strokeWidth="2" /></Svg>
        </PlainButton>
      </MdiButtons>
      <OnCanvas $left={3} $bottom={4} width="100" height="96" viewBox="0 0 100 96" fill="none" stroke={W}>
        <path d="M4.500 81.500h10v10h-10zM9.500 81V24M5 37l4.500-13L14 37M15 86.500h57M59 82l13 4.500L59 91" />
        <text x="5" y="16" fill={W} stroke="none">Y</text>
        <text x="82" y="93" fill={W} stroke="none">X</text>
      </OnCanvas>
      <OnCanvas $left={288} $bottom={8} width="51" height="51" viewBox="0 0 51 51" fill="none" stroke={W}>
        <path d="M0 25.500h51M25.500 0v51M20.500 20.500h10v10h-10z" />
      </OnCanvas>
    </Canvas>
    <LayoutTabs>
      <LayoutTab $w={14} aria-label="Layout list">
        <Svg width="10" height="5" viewBox="0 0 10 5"><path d="M0 5h10L5 0z" fill={W} /></Svg>
      </LayoutTab>
      {layoutArrows.map((d) => (
        <LayoutTab key={d} $w={14} aria-label="Scroll layouts">
          <Svg width="9" height="9" viewBox="0 0 9 9"><path d={d} fill="#8d949d" stroke="#8d949d" /></Svg>
        </LayoutTab>
      ))}
      <LayoutTab $w={47} $active>模型</LayoutTab>
      <LayoutTab $w={51}>布局1</LayoutTab>
      <LayoutTab $w={51}>布局2</LayoutTab>
      <LayoutTab $w={30}>+</LayoutTab>
    </LayoutTabs>
  </Document>
);

const CommandWindow = () => {
  const [command, setCommand] = useState('');
  return (
    <CommandPanel>
      <CommandStrip>
        <PlainButton aria-label="Close command window"><CloseX color="#69707b" weight={2} /></PlainButton>
      </CommandStrip>
      <CommandBody>
        <CommandLog>
          <ol>
            {[1, 2, 3, 4, 5].map((n) => <li key={n}>命令:</li>)}
          </ol>
          <Scrollbar thumb="77px" top={13} margin="0 1px 0 0" />
        </CommandLog>
        <CommandLine>
          命令:&nbsp;
          <input value={command} onChange={(e) => setCommand(e.target.value)} />
        </CommandLine>
      </CommandBody>
    </CommandPanel>
  );
};

const Properties = () => (
  <Palette $w={221} $gap={4}>
    <PaletteHead $pad={11}>
      <h2>特性</h2>
      <PlainButton aria-label="Close properties"><CloseX /></PlainButton>
    </PaletteHead>
    <PropertiesBody>
      <Picker>
        <PickerSelect>
          <select aria-label="Selection" defaultValue="无选择"><option>无选择</option></select>
          <Caret />
        </PickerSelect>
        {['pickAdd', 'selectObj', 'quickSel'].map((name) => (
          <PickerButton key={name} aria-label={name}><Icon name={name} /></PickerButton>
        ))}
      </Picker>
      <PropertyScroll>
        <PropertyList>
          {groups.map((group, i) => (
            <section key={group.title}>
              <GroupHead $first={i === 0}>{group.title}<Caret /></GroupHead>
              <PropertyTable>
                <tbody>
                  {group.rows.map((row) => (
                    <PropertyRow key={row.name} $selected={row.selected} $readOnly={group.readOnly}>
                      <th scope="row">{row.name}</th>
                      <td>
                        <ValueCell>
                          {row.swatch && <Swatch $size={10} />}
                          {row.stroke && <Stroke $w={row.stroke} />}
                          <input aria-label={row.name} defaultValue={row.value} readOnly={group.readOnly} />
                          {row.selected && <Icon name="calc" />}
                        </ValueCell>
                      </td>
                    </PropertyRow>
                  ))}
                </tbody>
              </PropertyTable>
            </section>
          ))}
        </PropertyList>
        <Scrollbar thumb="313px" margin="22px 1px 0 8px" />
      </PropertyScroll>
    </PropertiesBody>
  </Palette>
);

const Calculator = () => (
  <Palette $w={276} $gap={6}>
    <PaletteHead $pad={18}>
      <h2>计算器</h2>
      <PlainButton aria-label="Close calculator"><CloseX /></PlainButton>
    </PaletteHead>
    <CalcBody>
      <CalcMain>
        <CalcTools>
          {['eraserY', 'history', 'toCmd', 'getPoint', 'distance', 'angle', 'cross', 'help'].map((name) => (
            <CalcTool key={name} aria-label={name}><Icon name={name} /></CalcTool>
          ))}
        </CalcTools>
        <CalcHistory />
        <CalcInput aria-label="Expression" />
        <CalcHeading $first>数字键区<span>&lt;&lt;</span></CalcHeading>
        <Keys>{numberKeys.map((k) => <button key={k}>{k}</button>)}</Keys>
        <CalcHeading>科学<span>&lt;&lt;</span></CalcHeading>
        <Keys>{scienceKeys.map((k) => <button key={k}>{k}</button>)}</Keys>
        <CalcHeading>变量<span>&lt;&lt;</span></CalcHeading>
        <VarTools>
          <CalcTool aria-label="New variable">
            <VarLetter $color={B}>x<VarMark $color={Y}>+</VarMark></VarLetter>
          </CalcTool>
          <CalcTool $flat aria-label="Edit variable">
            <VarLetter $color="#a3a8ae">x<VarMark $color="#c5c8cc">/</VarMark></VarLetter>
          </CalcTool>
          <CalcTool $flat aria-label="Delete variable">
            <VarLetter $color="#a3a8ae">x<VarMark $color="#c5c8cc" $low>×</VarMark></VarLetter>
          </CalcTool>
          <CalcTool $flat aria-label="Send to calculator"><Icon name="calcGrey" /></CalcTool>
        </VarTools>
        <TreeBox>
          <Tree>
            <li>
              <TreeItem>
                <Svg width="9" height="9" viewBox="0 0 9 9"><path d="M0 0h9v9H0z" fill="#eceef0" /><path d="M2 4h5v1H2z" fill="#3a62a8" /></Svg>
                <Icon name="folderVar" />
                变量样例
              </TreeItem>
              <ul>
                {['Phi', 'dee', 'ille'].map((name, i) => (
                  <li key={name}>
                    <TreeItem>
                      <TreeLine />
                      <VarCell><VarLetter $color={B} $bold={i === 0}>{i === 0 ? 'k' : 'x'}</VarLetter></VarCell>
                      {name}
                    </TreeItem>
                  </li>
                ))}
              </ul>
            </li>
          </Tree>
          <Scrollbar thumb="100px" endless />
        </TreeBox>
      </CalcMain>
      <Scrollbar thumb="35px" margin="30px 0 0 5px" />
    </CalcBody>
  </Palette>
);

const WinButtonRow = styled.div`
  display: flex;
`;

const WinButtons = () => (
  <WinButtonRow>
    <WinButton aria-label="Minimize">
      <Svg width="10" height="10" viewBox="0 0 10 10"><path d="M0 4h10v1H0z" /></Svg>
    </WinButton>
    <WinButton aria-label="Restore">
      <Svg width="10" height="10" viewBox="0 0 10 10" fill="none" stroke="#000"><path d="M.500 2.500h7v7h-7zM2.500 2V.500h7v7H8" /></Svg>
    </WinButton>
    <WinButton aria-label="Close"><CloseX color="#000" /></WinButton>
  </WinButtonRow>
);

const App = () => (
  <>
    <GlobalStyle />
    <Window>
      <TitleBar>
        <Icon name="logo" />
        <WinTitle>- [Drawing1.dwg]</WinTitle>
        <WinButtons />
      </TitleBar>
      <MenuBar>
        {menus.map(([name, key]) => (
          <MenuItem key={key}>{name}<Key>{key}</Key></MenuItem>
        ))}
      </MenuBar>
      <Toolbars />
      <Main>
        <Workspace>
          <DrawingRow>
            <SideColumn><SideToolbar names={drawTools} /></SideColumn>
            <DrawingArea />
            <SideColumn>
              <SideToolbar names={modifyTools} />
              <SideToolbar names={['order']} />
            </SideColumn>
          </DrawingRow>
          <CommandWindow />
        </Workspace>
        <Properties />
        <Calculator />
      </Main>
      <StatusBar>
        <Coordinates>687.0727, 197.0280, 0.0000</Coordinates>
        {statusTools.map(([name, on]) => (
          <StatusToggle key={name} $on={on} aria-label={name}><Icon name={name} /></StatusToggle>
        ))}
        <StatusEnd>
          <StatusToggle aria-label="Annotation scale"><Icon name="annot" /></StatusToggle>
          <ScaleText>1:1<Caret /></ScaleText>
          {['annotBulb', 'annot', 'gear', 'expand'].map((name) => (
            <StatusToggle key={name} aria-label={name}><Icon name={name} /></StatusToggle>
          ))}
        </StatusEnd>
      </StatusBar>
      <EdgeMeter><i /></EdgeMeter>
      <Watermark>搜狐号@70字软件</Watermark>
    </Window>
  </>
);

export default App;
